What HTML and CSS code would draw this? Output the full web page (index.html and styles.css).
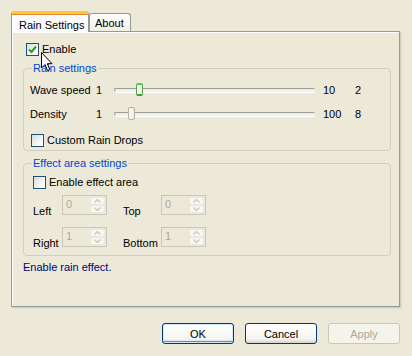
FILE: index.html
```html
<!DOCTYPE html>
<html>
<head>
<meta charset="utf-8">
<link rel="stylesheet" href="styles.css">
</head>
<body>
<div class="dialog">
  <div class="tabs">
    <div class="tab active">Rain Settings</div>
    <div class="tab">About</div>
  </div>
  <div class="panel">
    <label class="check enable-main">
      <span class="box checked"><svg width="9" height="9" viewBox="0 0 9 9"><path d="M1 4.5 L3.5 7 L8 1.5" fill="none" stroke="#21a121" stroke-width="2"/></svg></span>
      <span>Enable</span>
    </label>
    <fieldset class="group rain">
      <legend>Rain settings</legend>
      <div class="slider-row">
        <span class="slabel">Wave speed</span>
        <span class="smin">1</span>
        <div class="track"><span class="thumb focus" style="left:21px"></span></div>
        <span class="smax">10</span>
        <span class="sval">2</span>
      </div>
      <div class="slider-row">
        <span class="slabel">Density</span>
        <span class="smin">1</span>
        <div class="track"><span class="thumb" style="left:13px"></span></div>
        <span class="smax">100</span>
        <span class="sval">8</span>
      </div>
      <label class="check custom">
        <span class="box"></span>
        <span>Custom Rain Drops</span>
      </label>
    </fieldset>
    <fieldset class="group effect">
      <legend>Effect area settings</legend>
      <label class="check area">
        <span class="box"></span>
        <span>Enable effect area</span>
      </label>
      <div class="spin-grid">
        <span class="plabel">Left</span>
        <div class="spin"><span class="sv">0</span><span class="sb"><i class="up"></i><i class="dn"></i></span></div>
        <span class="plabel">Top</span>
        <div class="spin"><span class="sv">0</span><span class="sb"><i class="up"></i><i class="dn"></i></span></div>
        <span class="plabel">Right</span>
        <div class="spin"><span class="sv">1</span><span class="sb"><i class="up"></i><i class="dn"></i></span></div>
        <span class="plabel">Bottom</span>
        <div class="spin"><span class="sv">1</span><span class="sb"><i class="up"></i><i class="dn"></i></span></div>
      </div>
    </fieldset>
    <div class="status">Enable rain effect.</div>
  </div>
  <div class="buttons">
    <button class="btn default">OK</button>
    <button class="btn">Cancel</button>
    <button class="btn disabled">Apply</button>
  </div>
  <svg class="cursor" width="12" height="20" viewBox="0 0 12 20"><path d="M0.5 0.5 L0.5 16 L4 12.5 L6.5 18.5 L8.8 17.5 L6.3 11.7 L11 11.7 Z" fill="#fff" stroke="#000" stroke-width="1"/></svg>
</div>
</body>
</html>
```

FILE: styles.css
```css
html, body {
  margin: 0;
  padding: 0;
  background: #ece9d8;
}
body {
  width: 412px;
  height: 356px;
  overflow: hidden;
  font-family: "Liberation Sans", Arial, sans-serif;
  font-size: 11px;
  color: #000;
}
.dialog {
  position: relative;
  padding: 11px 0 0 11px;
}
.tabs {
  display: flex;
  align-items: flex-end;
  height: 20px;
  position: relative;
  z-index: 2;
}
.tab {
  box-sizing: border-box;
  height: 18px;
  padding: 3px 6px 0 5px;
  border: 1px solid #919b9c;
  border-bottom: none;
  border-radius: 3px 3px 0 0;
  background: linear-gradient(#fefefe, #f1efe6);
  margin-bottom: 0;
}
.tab.active {
  height: 21px;
  width: 78px;
  padding: 5px 0 0 7px;
  background: #fcfcfe;
  border-top: 3px solid #ffc83c;
  box-shadow: inset 0 1px 0 #e68b2c;
  margin-bottom: -1px;
  border-left-color: #919b9c;
}
.panel {
  box-sizing: border-box;
  width: 389px;
  height: 276px;
  border: 1px solid #919b9c;
  border-left-color: #919b9c;
  box-shadow: inset 1px 1px 0 #fff, 1px 1px 0 #d0cdbc, 2px 2px 0 #e2dfd0;
  background: #ece9d8;
  padding: 10px 8px 0 11px;
}
.check {
  display: flex;
  align-items: center;
  gap: 3px;
  height: 14px;
}
.box {
  box-sizing: border-box;
  width: 13px;
  height: 13px;
  border: 1px solid #1c5180;
  background: linear-gradient(135deg, #dcdbd5, #fdfdfc 80%);
  display: flex;
  align-items: center;
  justify-content: center;
}
.enable-main {
  margin-left: 3px;
  margin-bottom: 6px;
}
.group {
  margin: 0;
  border: 1px solid #d0d0bf;
  border-radius: 4px;
  padding: 0;
  min-width: 0;
}
.group legend {
  color: #0046d5;
  padding: 0 1px;
  line-height: 12px;
}
.rain {
  height: 89px;
  box-sizing: border-box;
  padding: 4px 0 0 6px;
}
.rain legend {
  margin-left: 2px;
}
.slider-row {
  display: flex;
  align-items: center;
  height: 24px;
}
.slabel {
  width: 66px;
}
.smin {
  width: 18px;
}
.track {
  position: relative;
  width: 201px;
  height: 4px;
  box-sizing: border-box;
  border-top: 1px solid #9d9c99;
  border-left: 1px solid #9d9c99;
  border-radius: 2px;
  background: #f0efe8;
  box-shadow: 0 1px 0 #fff;
  margin-right: 8px;
}
.thumb {
  position: absolute;
  top: -6px;
  width: 7px;
  height: 13px;
  box-sizing: border-box;
  border: 1px solid #b3b0a5;
  border-radius: 2px;
  background: linear-gradient(90deg, #fafaf6, #ecebe5);
}
.thumb.focus {
  border-color: #52a84e;
  border-top: 2px solid #5cc456;
  border-bottom: 2px solid #3f9b3b;
}
.smax {
  width: 32px;
}
.sval {
  width: 20px;
}
.custom {
  margin-top: 7px;
  margin-left: 1px;
}
.effect {
  margin-top: 6px;
  height: 99px;
  box-sizing: border-box;
  padding: 6px 0 0 9px;
}
.effect legend {
  margin-left: -1px;
}
.area {
  margin-bottom: 6px;
}
.spin-grid {
  display: grid;
  grid-template-columns: 29px 44px 55px 45px;
  grid-auto-rows: 20px;
  row-gap: 12px;
  column-gap: 0;
  margin-left: 0;
  align-items: end;
}
.plabel {
  line-height: 12px;
  position: relative;
  top: 2px;
}
.plabel:nth-child(3) {
  padding-left: 17px;
}
.plabel:nth-child(7) {
  padding-left: 17px;
}
.spin {
  box-sizing: border-box;
  width: 45px;
  height: 20px;
  border: 1px solid #c9c7ba;
  display: flex;
  justify-content: space-between;
  padding: 1px;
  background: #ece9d8;
}
.sv {
  color: #aca899;
  padding: 1px 0 0 2px;
  line-height: 12px;
}
.sb {
  display: flex;
  flex-direction: column;
  width: 15px;
  gap: 0;
}
.sb i {
  flex: 1;
  border: 1px solid #e9e8e0;
  border-radius: 2px;
  background: #f7f7f4 no-repeat center;
}
.sb .up {
  background-image: url("data:image/svg+xml;utf8,<svg xmlns='http://www.w3.org/2000/svg' width='7' height='4'><path d='M0.5 3.5 L3.5 0.5 L6.5 3.5' fill='none' stroke='%23c9c7ba' stroke-width='1.3'/></svg>");
}
.sb .dn {
  background-image: url("data:image/svg+xml;utf8,<svg xmlns='http://www.w3.org/2000/svg' width='7' height='4'><path d='M0.5 0.5 L3.5 3.5 L6.5 0.5' fill='none' stroke='%23c9c7ba' stroke-width='1.3'/></svg>");
}
.status {
  color: #00007f;
  margin-top: 5px;
}
.buttons {
  display: flex;
  justify-content: flex-end;
  gap: 11px;
  width: 389px;
  margin-top: 16px;
}
.btn {
  box-sizing: border-box;
  width: 72px;
  height: 21px;
  font-family: "Liberation Sans", Arial, sans-serif;
  font-size: 11px;
  border: 1px solid #003c74;
  border-radius: 3px;
  background: linear-gradient(#fff, #f4f4f0 80%, #d6d0c5);
  color: #000;
  padding: 0;
}
.btn.default {
  box-shadow: inset 0 0 0 1px #cee7ff, inset 0 -1px 0 1px #6982ee;
}
.btn.disabled {
  border-color: #c9c7ba;
  background: #f5f4ea;
  color: #aca899;
}
.cursor {
  position: absolute;
  left: 41px;
  top: 52px;
}
```
